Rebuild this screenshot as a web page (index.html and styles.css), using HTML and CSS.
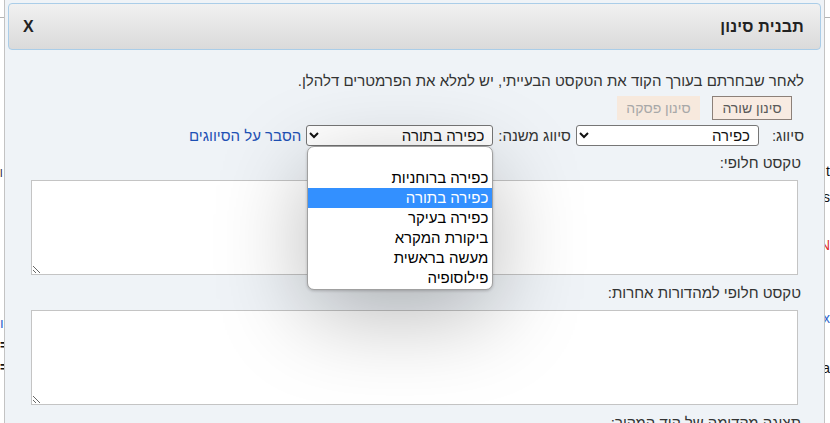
FILE: index.html
```html
<!DOCTYPE html>
<html lang="he">
<head>
<meta charset="utf-8">
<title>תבנית סינון</title>
<link rel="stylesheet" href="styles.css">
</head>
<body>
<div class="page">
  <div class="page-rule"></div>
  <div class="page-cols">
    <div class="page-left">
      <span class="frag f1">ן</span>
      <span class="frag f2 blue">ו</span>
      <span class="frag f3">=</span>
      <span class="frag f4">=</span>
    </div>
    <div class="page-right">
      <span class="frag r1">t</span>
      <span class="frag r2">s</span>
      <span class="frag r3 red">N</span>
      <span class="frag r4 blue">x</span>
      <span class="frag r5">a</span>
    </div>
  </div>
</div>

<div class="dialog" dir="rtl">
  <div class="titlebar">
    <span class="title">תבנית סינון</span>
    <span class="close">X</span>
  </div>
  <div class="content">
    <div class="top">
      <p class="intro">לאחר שבחרתם בעורך הקוד את הטקסט הבעייתי, יש למלא את הפרמטרים דלהלן.</p>
      <div class="buttons">
        <button class="btn btn-active">סינון שורה</button>
        <button class="btn btn-disabled">סינון פסקה</button>
      </div>
      <div class="select-row">
        <span class="lbl lbl-first">סיווג:</span>
        <select class="sel sel-main"><option>כפירה</option></select>
        <span class="lbl">סיווג משנה:</span>
        <div class="sel-wrap">
          <select class="sel sel-sub"><option>כפירה בתורה</option></select>
          <ul class="listbox">
            <li class="opt">&nbsp;</li>
            <li class="opt">כפירה ברוחניות</li>
            <li class="opt opt-hl">כפירה בתורה</li>
            <li class="opt">כפירה בעיקר</li>
            <li class="opt">ביקורת המקרא</li>
            <li class="opt">מעשה בראשית</li>
            <li class="opt">פילוסופיה</li>
          </ul>
        </div>
        <a class="link" href="#">הסבר על הסיווגים</a>
      </div>
    </div>
    <div class="field">
      <label class="field-label">טקסט חלופי:</label>
      <textarea class="ta" dir="rtl"></textarea>
    </div>
    <div class="field">
      <label class="field-label">טקסט חלופי למהדורות אחרות:</label>
      <textarea class="ta" dir="rtl"></textarea>
    </div>
    <div class="field">
      <label class="field-label">תצוגה מקדימה של קוד המקור:</label>
    </div>
  </div>
</div>
</body>
</html>
```

FILE: styles.css
```css
* { box-sizing: border-box; }
html, body {
  margin: 0;
  padding: 0;
  background: #ffffff;
  width: 830px;
  height: 423px;
  overflow: hidden;
  font-family: "Liberation Sans", Arial, sans-serif;
}

/* underlying page */
.page {
  width: 830px;
  height: 423px;
  padding-top: 17px;
}
.page-rule {
  height: 1px;
  background: #b4b4b4;
}
.page-cols {
  display: flex;
  justify-content: space-between;
}
.page-left, .page-right {
  display: flex;
  flex-direction: column;
  width: 6px;
  font-size: 14px;
  line-height: 14px;
  color: #111;
}
.page-right { align-items: flex-end; width: 8px; }
.frag { display: block; }
.f1 { margin-top: 147px; font-size: 10px; }
.f2 { margin-top: 137px; }
.f3 { margin-top: 8px; font-weight: bold; }
.f4 { margin-top: 8px; font-weight: bold; }
.r1 { margin-top: 146px; }
.r2 { margin-top: 12px; }
.r3 { margin-top: 34px; }
.r4 { margin-top: 59px; }
.r5 { margin-top: 36px; }
.red { color: #d33; }
.blue { color: #36c; }

/* dialog */
.dialog {
  position: absolute;
  left: 4px;
  top: 0;
  width: 821px;
  height: 440px;
  background: #eff3f7;
  border: 1px solid #c3c3c3;
  border-top: none;
  padding: 3px 3px 0 3px;
  color: #333;
}
.titlebar {
  height: 47px;
  border: 1px solid #aacde8;
  border-radius: 4px;
  background: linear-gradient(#f1f1f1, #dadada);
  display: flex;
  align-items: center;
  justify-content: space-between;
  padding: 0 16px 0 14px;
}
.title {
  font-weight: bold;
  font-size: 16px;
  color: #222;
  padding-top: 1px;
  letter-spacing: 0.2px;
}
.close {
  font-weight: bold;
  font-size: 16px;
  color: #222;
  padding-top: 1px;
}

.content {
  padding: 21px 20px 0 23px;
}
.top {
  margin-right: -3px;
}
.intro {
  margin: 0;
  font-size: 15px;
  line-height: 20px;
  color: #333;
}
.buttons {
  display: flex;
  gap: 12px;
  margin-top: 5px;
  padding-right: 12px;
}
.btn {
  height: 24px;
  font-family: inherit;
  font-size: 14px;
  padding: 0;
  border-radius: 0;
  white-space: nowrap;
  cursor: pointer;
}
.btn-active {
  width: 80px;
  background: #f8ebe2;
  border: 1px solid #8c8079;
  color: #5a5a5a;
}
.btn-disabled {
  width: 83px;
  background: #f7e9dd;
  border: 1px solid #f7e9dd;
  color: #a8a8a8;
}

.select-row {
  display: flex;
  align-items: center;
  gap: 5px;
  margin-top: 5px;
  height: 21px;
}
.lbl {
  font-size: 15px;
  color: #333;
}
.lbl-first { margin-left: 8px; }
.sel {
  height: 21px;
  font-family: inherit;
  font-size: 15px;
  color: #111;
  background: #fff;
  border: 1px solid #767676;
  border-radius: 3px;
  padding: 0 4px;
}
.sel-main { width: 183px; }
.sel-sub { width: 187px; display: block; }
.sel-wrap { position: relative; }
.link {
  font-size: 15px;
  color: #1d50b4;
  text-decoration: none;
}

.listbox {
  position: absolute;
  top: 21px;
  right: 0;
  width: 186px;
  margin: 0;
  padding: 1px 0;
  list-style: none;
  background: #fff;
  border: 1px solid #a0a0a0;
  border-radius: 7px;
  box-shadow: 0 24px 90px rgba(0, 0, 0, 0.28), 0 1px 3px rgba(0,0,0,0.2);
  z-index: 5;
  overflow: hidden;
}
.opt {
  height: 20px;
  line-height: 20px;
  font-size: 15px;
  color: #000;
  padding-right: 4px;
  white-space: nowrap;
}
.opt-hl {
  background: #3390ff;
  color: #fff;
}

.field {
  display: flex;
  flex-direction: column;
  margin-top: 7px;
}
.field-label {
  font-size: 15px;
  line-height: 20px;
  color: #333;
  margin-bottom: 7px;
}
.ta {
  display: block;
  width: 767px;
  height: 95px;
  margin-right: 3px;
  border: 1px solid #c4c4c4;
  background: #fff;
  border-radius: 0;
  font-family: inherit;
  font-size: 14px;
  resize: vertical;
}
.field + .field { margin-top: 8px; }
```
